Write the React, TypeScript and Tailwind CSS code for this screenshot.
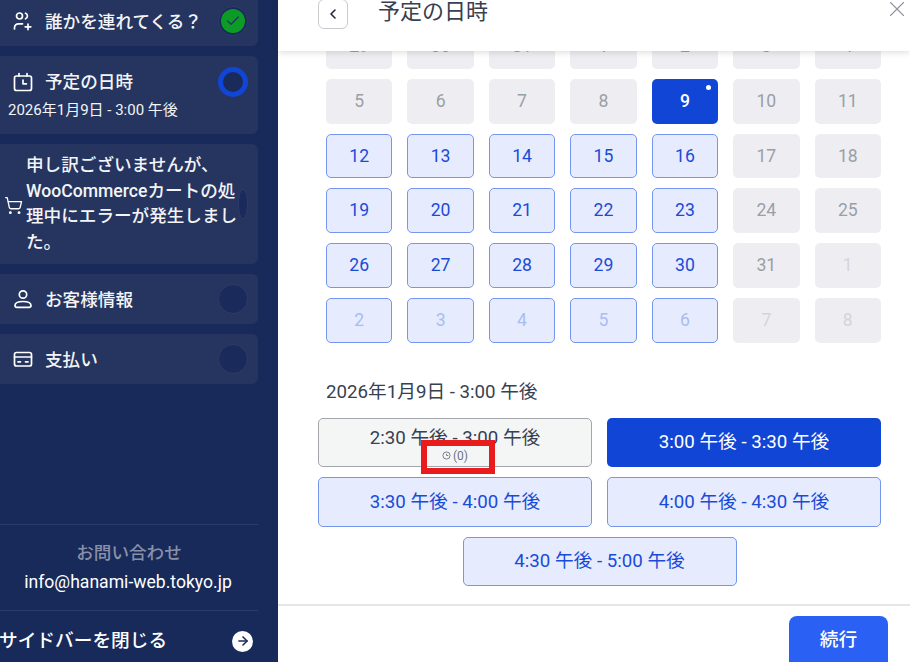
import { ArrowRight, ChevronLeft, ShoppingCart, X, Check } from "lucide-react";

type Day = { n: number; kind: "off" | "open" | "sel" | "nextOpen" | "nextOff" };

const off = (ns: number[]): Day[] => ns.map((n) => ({ n, kind: "off" }));
const open = (ns: number[]): Day[] => ns.map((n) => ({ n, kind: "open" }));

const days: Day[] = [
  ...off([29, 30, 31, 1, 2, 3, 4]),
  ...off([5, 6, 7, 8]),
  { n: 9, kind: "sel" },
  ...off([10, 11]),
  ...open([12, 13, 14, 15, 16]),
  ...off([17, 18]),
  ...open([19, 20, 21, 22, 23]),
  ...off([24, 25]),
  ...open([26, 27, 28, 29, 30]),
  ...off([31]),
  { n: 1, kind: "nextOff" },
  ...[2, 3, 4, 5, 6].map((n): Day => ({ n, kind: "nextOpen" })),
  { n: 7, kind: "nextOff" },
  { n: 8, kind: "nextOff" },
];

const dayStyles: Record<Day["kind"], string> = {
  off: "bg-[#eeeef2] text-[#9a9fa6]",
  open: "bg-[#e6ecfd] border border-[#7496ee] text-[#1a4bd8]",
  sel: "bg-[#1145d6] text-white font-medium relative",
  nextOpen: "bg-[#e6ecfd] border border-[#7496ee] text-[#a9bdf2]",
  nextOff: "bg-[#eeeef2] text-[#d3d5da]",
};

function GuestIcon() {
  return (
    <svg width="20" height="20" viewBox="0 0 20 20" fill="none" stroke="currentColor" strokeWidth="1.7" strokeLinecap="round">
      <circle cx="6.5" cy="5" r="3" />
      <path d="M12.5 2.2a3 3 0 0 1 0 5.6" />
      <path d="M1.5 18v-1.2a4 4 0 0 1 4-4h4" />
      <path d="M15 13v5.6M12.2 15.8h5.6" />
    </svg>
  );
}

function ScheduleIcon() {
  return (
    <svg width="20" height="20" viewBox="0 0 20 20" fill="none" stroke="currentColor" strokeWidth="1.7" strokeLinecap="round" strokeLinejoin="round">
      <rect x="1.5" y="4" width="17" height="14.5" rx="2" />
      <path d="M6 1.5V4M14 1.5V4" />
      <path d="M10 8v3.8h3.4" />
    </svg>
  );
}

function PersonIcon() {
  return (
    <svg width="20" height="20" viewBox="0 0 20 20" fill="none" stroke="currentColor" strokeWidth="1.7" strokeLinecap="round">
      <circle cx="10" cy="5.5" r="3.7" />
      <path d="M2 16.5c0-2.6 3.2-4 8-4s8 1.4 8 4c0 1.2-.8 1.8-2 1.8H4c-1.2 0-2-.6-2-1.800z" />
    </svg>
  );
}

function CardIcon() {
  return (
    <svg width="20" height="20" viewBox="0 0 20 20" fill="none" stroke="currentColor" strokeWidth="1.7" strokeLinecap="round">
      <rect x="1.5" y="3.5" width="17" height="13.5" rx="2" />
      <path d="M1.5 8h17" />
      <path d="M5 12.8h2.500M12.500 12.8H15" />
    </svg>
  );
}

function SideItem({ icon, label, status }: { icon: React.ReactNode; label: string; status?: React.ReactNode }) {
  return (
    <div className="h-[50px] bg-[#25355f] rounded-r-md flex items-center pl-[13px] pr-[10px]">
      <span className="w-[20px] flex justify-center text-white">{icon}</span>
      <span className="ml-[12px] mt-[2px] text-[17.6px] font-medium text-[#f3f4f7]">{label}</span>
      <span className="ml-auto">
        {status ?? <span className="block w-[30px] h-[30px] rounded-full bg-[#1a2a5a] border border-[#2d3c68]" />}
      </span>
    </div>
  );
}

export default function App() {
  return (
    <div className="relative w-[910px] h-[662px] overflow-hidden flex bg-white font-['Roboto','Noto_Sans_CJK_JP',sans-serif]">
      {/* Sidebar */}
      <aside className="w-[278px] shrink-0 bg-[#182a5a] pr-[20px] flex flex-col">
        <div className="-mt-[4px] flex flex-col gap-[10px]">
          <SideItem
            icon={<GuestIcon />}
            label="誰かを連れてくる？"
            status={
              <span className="w-[30px] h-[30px] rounded-full bg-[#1a2a5a] border border-[#2d3c68] flex items-center justify-center">
                <span className="w-[24px] h-[24px] rounded-full bg-[#0b9b26] flex items-center justify-center">
                  <Check size={16} strokeWidth={2} className="text-[#22356a]" />
                </span>
              </span>
            }
          />
          <div className="h-[78px] bg-[#25355f] rounded-r-md pl-[8px] pr-[10px] pt-[11px]">
            <div className="flex items-center pl-[5px]">
              <span className="w-[20px] flex justify-center text-white">
                <ScheduleIcon />
              </span>
              <span className="ml-[12px] text-[17.6px] font-medium text-[#f3f4f7]">予定の日時</span>
              <span className="ml-auto w-[30px] h-[30px] rounded-full bg-[#1a2a5a] border-[5px] border-[#1145d6]" />
            </div>
            <p className="text-[15px] leading-[20px] text-[#f3f4f7] mt-[3px]">2026年1月9日 - 3:00 午後</p>
          </div>
          <div className="h-[120px] bg-[#25355f] rounded-r-md flex items-center pl-[4px]">
            <ShoppingCart size={19} strokeWidth={1.7} className="text-white shrink-0 mt-[2px]" />
            <p className="ml-[3px] w-[212px] shrink-0 text-[17.6px] font-medium leading-[25.5px] text-[#f3f4f7]">
              申し訳ございませんが、WooCommerceカートの処理中にエラーが発生しました。
            </p>
            <span className="w-[10px] h-[30px] rounded-[50%] bg-[#1a2a5a] border border-[#2d3c68]" />
          </div>
          <SideItem icon={<PersonIcon />} label="お客様情報" />
          <SideItem icon={<CardIcon />} label="支払い" />
        </div>

        <div className="mt-auto">
          <div className="border-t border-[#2d3c68] h-[86px] flex flex-col items-center pt-[16px]">
            <p className="text-[17.6px] font-medium leading-[24px] text-[#8890a8]">お問い合わせ</p>
            <p className="text-[17.6px] leading-[24px] text-white mt-[5px] -ml-[2px]">info@hanami-web.tokyo.jp</p>
          </div>
          <div className="border-t border-[#2d3c68] h-[52px] flex items-center justify-between pr-[5px] pt-[9px]">
            <span className="text-[18.7px] font-medium text-white -ml-[1px]">サイドバーを閉じる</span>
            <span className="w-[21px] h-[21px] rounded-full bg-white flex items-center justify-center">
              <ArrowRight size={14} strokeWidth={2.6} className="text-[#182a5a]" />
            </span>
          </div>
        </div>
      </aside>

      {/* Main panel */}
      <main className="flex-1 min-w-0 flex flex-col">
        <header className="relative z-10 h-[51px] shrink-0 bg-white shadow-[0_2px_6px_rgba(0,0,0,0.12)] flex pl-[40px]">
          <button className="w-[30px] h-[30px] -mt-[1px] rounded-md border border-[#c9cbcf] flex items-center justify-center text-[#1f2937]">
            <ChevronLeft size={16} strokeWidth={2.4} />
          </button>
          <h1 className="ml-[30px] text-[22px] leading-[24px] text-[#374151]">予定の日時</h1>
          <X size={26} strokeWidth={1} className="absolute right-0 -top-[4px] text-[#8f949b]" />
        </header>

        <section className="flex-1 min-h-0 overflow-hidden pl-[40px] pr-[29px]">
          <div className="-mt-[27px] ml-[8px] grid grid-cols-7 gap-x-[15px] gap-y-[10px] auto-rows-[44.75px]">
            {days.map((d, i) => (
              <div key={i} className={`rounded-[5px] flex items-center justify-center text-[17.6px] ${dayStyles[d.kind]}`}>
                {d.n}
                {d.kind === "sel" && <span className="absolute top-[6px] right-[7px] w-[5px] h-[5px] rounded-full bg-white" />}
              </div>
            ))}
          </div>

          <p className="ml-[8px] mt-[37.5px] text-[18.7px] leading-[24px] text-[#374151]">2026年1月9日 - 3:00 午後</p>

          <div className="mt-[13.5px] flex flex-wrap justify-center gap-x-[15px] gap-y-[10px]">
            <div className="w-[274px] h-[49.5px] rounded-[5px] border border-[#a3a6ab] bg-[#f4f6f6] flex flex-col items-center pt-[7px] text-[#374151]">
              <span className="text-[18.7px] leading-[24px]">2:30 午後 - 3:00 午後</span>
              <span className="flex items-center gap-[2px] text-[12px] leading-[14px] text-[#6b7280] -mt-[1px]">
                <svg width="9" height="9" viewBox="0 0 10 10" fill="none" stroke="currentColor" strokeWidth="1">
                  <circle cx="5" cy="5" r="4" />
                  <path d="M5 3v2h2" />
                </svg>
                (0)
              </span>
            </div>
            <div className="w-[274px] h-[49.5px] rounded-[5px] bg-[#1145d6] flex items-center justify-center text-[18.7px] text-white">
              3:00 午後 - 3:30 午後
            </div>
            {["3:30 午後 - 4:00 午後", "4:00 午後 - 4:30 午後", "4:30 午後 - 5:00 午後"].map((t) => (
              <div key={t} className="w-[274px] h-[49.5px] rounded-[5px] border border-[#7496ee] bg-[#e6ecfd] flex items-center justify-center text-[18.7px] text-[#1a4bd8]">
                {t}
              </div>
            ))}
          </div>
        </section>

        <footer className="h-[58px] shrink-0 border-t-2 border-[#e6e6e6] flex justify-end pr-[22px] pt-[10px]">
          <button className="w-[99px] h-[60px] rounded-lg bg-[#2b60f5] text-white text-[18.7px] font-medium pb-[12px]">
            続行
          </button>
        </footer>
      </main>

      {/* Red highlight drawn over the slot */}
      <div className="absolute left-[421px] top-[440px] w-[74px] h-[34px] border-[6px] border-[#e81c1c]" />
    </div>
  );
}
